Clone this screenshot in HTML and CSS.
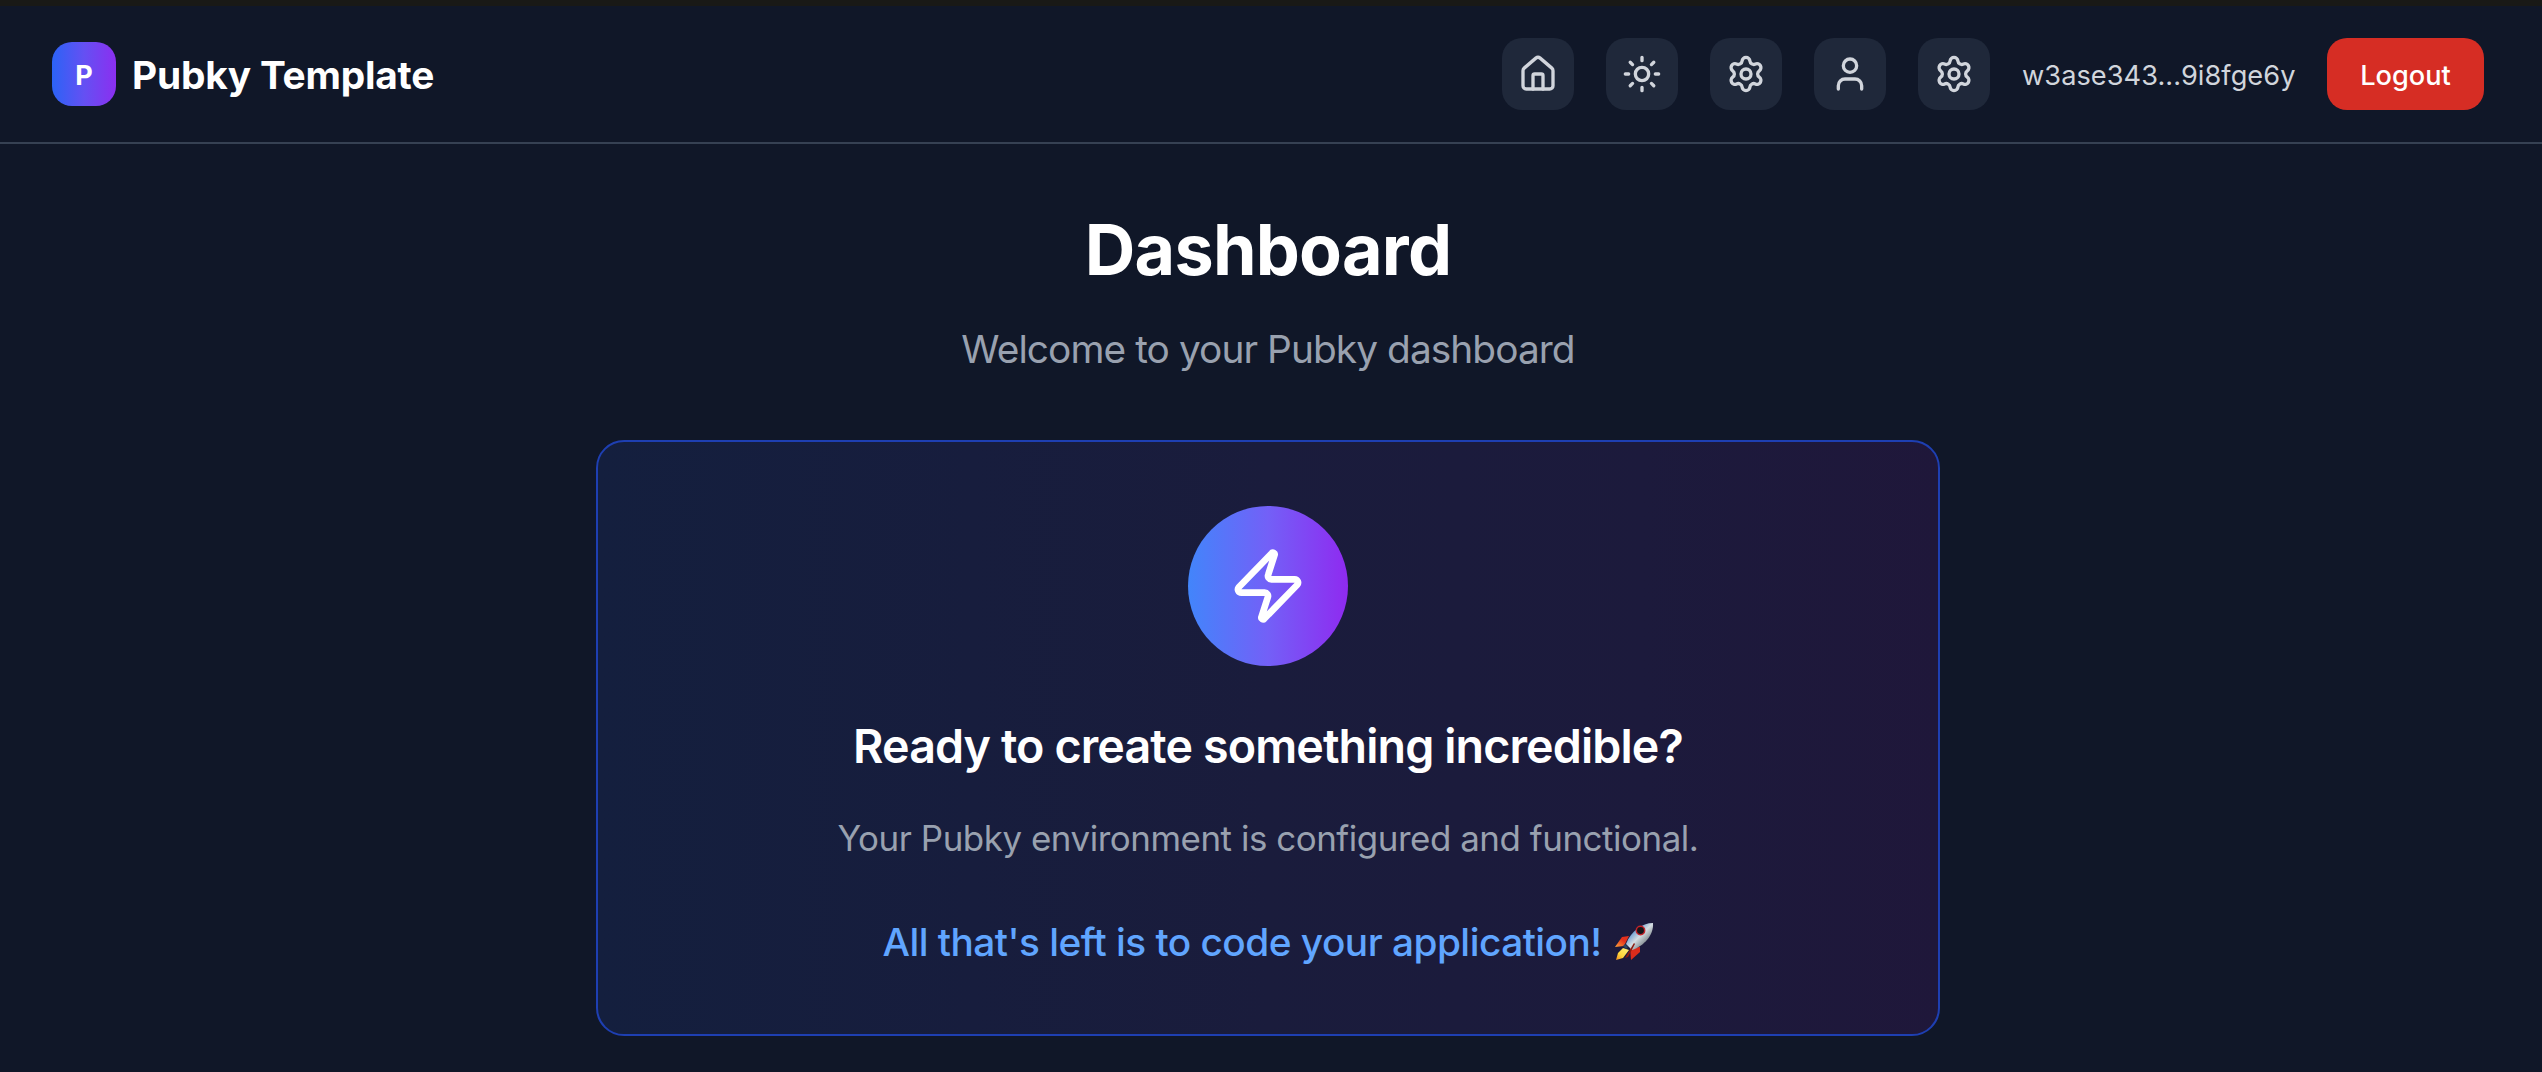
FILE: index.html
```html
<!DOCTYPE html>
<html lang="en">
<head>
<meta charset="utf-8">
<title>Pubky Template</title>
<link rel="stylesheet" href="styles.css">
</head>
<body>
<svg class="sprite" aria-hidden="true">
  <symbol id="settings" viewBox="0 0 24 24"><path d="M9.671 4.136a2.34 2.34 0 0 1 4.659 0 2.34 2.34 0 0 0 3.319 1.915 2.34 2.34 0 0 1 2.33 4.033 2.34 2.34 0 0 0 0 3.831 2.34 2.34 0 0 1-2.33 4.033 2.34 2.34 0 0 0-3.319 1.915 2.34 2.34 0 0 1-4.659 0 2.34 2.34 0 0 0-3.32-1.915 2.34 2.34 0 0 1-2.33-4.033 2.34 2.34 0 0 0 0-3.831A2.34 2.34 0 0 1 6.35 6.051a2.34 2.34 0 0 0 3.319-1.915"/><circle cx="12" cy="12" r="3"/></symbol>
</svg>
<header class="header">
  <div class="brand">
    <div class="logo">P</div>
    <span class="brand-name">Pubky Template</span>
  </div>
  <nav class="nav">
    <button class="icon-btn" aria-label="Home"><svg class="icon" viewBox="0 0 24 24"><path d="M15 21v-8a1 1 0 0 0-1-1h-4a1 1 0 0 0-1 1v8"/><path d="M3 10a2 2 0 0 1 .709-1.528l7-5.999a2 2 0 0 1 2.582 0l7 5.999A2 2 0 0 1 21 10v9a2 2 0 0 1-2 2H5a2 2 0 0 1-2-2z"/></svg></button>
    <button class="icon-btn" aria-label="Theme"><svg class="icon" viewBox="0 0 24 24"><circle cx="12" cy="12" r="4"/><path d="M12 2v2M12 20v2M4.93 4.93l1.41 1.41M17.66 17.66l1.41 1.41M2 12h2M20 12h2M6.34 17.66l-1.41 1.41M19.07 4.93l-1.41 1.41"/></svg></button>
    <button class="icon-btn" aria-label="Settings"><svg class="icon"><use href="#settings"/></svg></button>
    <button class="icon-btn" aria-label="Profile"><svg class="icon" viewBox="0 0 24 24"><path d="M19 21v-2a4 4 0 0 0-4-4H9a4 4 0 0 0-4 4v2"/><circle cx="12" cy="7" r="4"/></svg></button>
    <button class="icon-btn" aria-label="Preferences"><svg class="icon"><use href="#settings"/></svg></button>
    <span class="user-key">w3ase343...9i8fge6y</span>
    <button class="logout">Logout</button>
  </nav>
</header>
<main class="main">
  <h1 class="title">Dashboard</h1>
  <p class="subtitle">Welcome to your Pubky dashboard</p>
  <section class="card">
    <div class="badge"><svg class="bolt" viewBox="0 0 24 24"><path d="M4 14a1 1 0 0 1-.78-1.63l9.9-10.2a.5.5 0 0 1 .86.46l-1.92 6.02A1 1 0 0 0 13 10h7a1 1 0 0 1 .78 1.63l-9.9 10.2a.5.5 0 0 1-.86-.46l1.92-6.02A1 1 0 0 0 11 14z"/></svg></div>
    <h2 class="card-title">Ready to create something incredible?</h2>
    <p class="card-text">Your Pubky environment is configured and functional.</p>
    <p class="card-cta"><span>All that's left is to code your application!</span>
      <svg class="rocket" viewBox="0 0 40 40" role="img" aria-label="Rocket">
        <defs>
          <linearGradient id="hull" x1="0" y1="0" x2="1" y2="1"><stop offset=".25" stop-color="#5b93cf"/><stop offset=".5" stop-color="#d5dde2"/><stop offset=".8" stop-color="#6b7478"/></linearGradient>
          <linearGradient id="flame" x1="1" y1="0" x2="0" y2="1"><stop offset="0" stop-color="#fff27a"/><stop offset=".6" stop-color="#ffd83d"/><stop offset="1" stop-color="#f08a1d"/></linearGradient>
          <linearGradient id="fin" x1="1" y1="0" x2="0" y2="1"><stop offset=".4" stop-color="#e3301c"/><stop offset="1" stop-color="#ffa63a"/></linearGradient>
        </defs>
        <path fill="url(#fin)" d="M15 14 8 15 1 25l9-1z"/>
        <path fill="#dc2c1c" d="M26 25v5l-9 8-1-12z"/>
        <path fill="url(#flame)" d="M9 26 4 31 2 38l7-2 6-8z"/>
        <path fill="url(#hull)" d="M39 1C28 1 17 9 12 22l6 6C30 24 40 13 39 1z"/>
        <path fill="#2c4561" d="m11 22 3 3-2 2-3-3z"/>
        <path fill="#8c1d12" d="m20 21-9 15 3-1 7-13z"/>
        <circle cx="26.500" cy="8.500" r="4.200" fill="#15161a" stroke="#c5242b" stroke-width="1.500"/>
      </svg>
    </p>
  </section>
</main>
</body>
</html>
```
FILE: styles.css
```css
* { box-sizing: border-box; margin: 0; }
body {
  min-height: 1072px;
  border-top: 6px solid #191916;
  background: #101728;
  color: #fff;
  font-family: Inter, "Liberation Sans", sans-serif;
}
button { border: 0; padding: 0; font: inherit; color: inherit; }
.sprite { position: absolute; width: 0; height: 0; }

.header {
  display: flex;
  align-items: center;
  justify-content: space-between;
  height: 138px;
  padding: 0 58px 0 52px;
  border-bottom: 2px solid #364153;
}
.brand { display: flex; align-items: center; gap: 16px; }
.logo {
  display: flex;
  align-items: center;
  justify-content: center;
  width: 64px;
  height: 64px;
  padding-top: 2px;
  border-radius: 20px;
  background: linear-gradient(to right, #2b63f6, #6450f3 50%, #8b2ff0);
  font-size: 27px;
  font-weight: 700;
}
.brand-name {
  padding-top: 1px;
  font-size: 38.8px;
  font-weight: 700;
  line-height: 56px;
  letter-spacing: -0.2px;
}
.nav { display: flex; align-items: center; gap: 32px; }
.icon-btn {
  display: flex;
  align-items: center;
  justify-content: center;
  width: 72px;
  height: 72px;
  border-radius: 20px;
  background: #1f283a;
  color: #d1d5dc;
}
.icon, .bolt {
  width: 40px;
  height: 40px;
  fill: none;
  stroke: currentColor;
  stroke-width: 2;
  stroke-linecap: round;
  stroke-linejoin: round;
}
.user-key {
  width: 273px;
  padding-top: 2px;
  font-size: 27.2px;
  letter-spacing: 0.05px;
  color: #d1d5dc;
  white-space: nowrap;
}
.logout {
  width: 157px;
  height: 72px;
  padding-top: 2px;
  border-radius: 20px;
  background: #d62d24;
  font-size: 27.2px;
  font-weight: 500;
}

.main {
  width: 1344px;
  margin: 0 auto;
  padding-top: 64px;
  text-align: center;
  transform: translateX(-3px);
}
.title {
  height: 80px;
  font-size: 70px;
  font-weight: 700;
  line-height: 83px;
  letter-spacing: -0.75px;
}
.subtitle {
  height: 56px;
  margin-top: 32px;
  font-size: 38.8px;
  line-height: 57px;
  letter-spacing: -0.92px;
  color: #99a1af;
}
.card {
  display: flex;
  flex-direction: column;
  align-items: center;
  height: 596px;
  margin-top: 64px;
  padding: 64px 0;
  border: 2px solid #1e3fb2;
  border-radius: 28px;
  background: linear-gradient(to right, #141f3e, #171d3d 28%, #1a1c3c 50%, #1c1a3c 78%, #1f173a);
}
.badge {
  display: flex;
  align-items: center;
  justify-content: center;
  width: 160px;
  height: 160px;
  border-radius: 50%;
  background: linear-gradient(to right, #4285fb, #7360f7 50%, #8f2af0);
}
.bolt { width: 80px; height: 80px; }
.card-title {
  height: 64px;
  margin-top: 48px;
  font-size: 46.6px;
  font-weight: 600;
  line-height: 65px;
  letter-spacing: -0.88px;
}
.card-text {
  height: 56px;
  margin-top: 32px;
  font-size: 34.9px;
  line-height: 57px;
  letter-spacing: -0.45px;
  color: #99a1af;
}
.card-cta {
  display: flex;
  align-items: center;
  gap: 12px;
  margin-top: 48px;
  font-size: 38.8px;
  font-weight: 500;
  line-height: 56px;
  letter-spacing: -0.52px;
  color: #60a5ff;
}
.rocket { width: 40px; height: 40px; }
```
